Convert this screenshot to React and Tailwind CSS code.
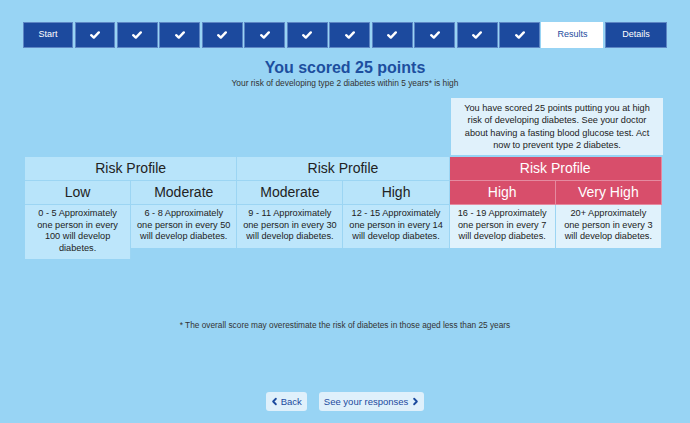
import { ChevronLeft, ChevronRight } from "lucide-react";

const font = { fontFamily: '"Liberation Sans", Arial, sans-serif' };

// tick mark drawn in each completed step
const Tick = () => (
  <svg width="10" height="8" viewBox="0 0 10 8" fill="none">
    <path d="M1.2 4.2 L3.8 6.6 L8.8 1.4" stroke="white" strokeWidth="2.4" strokeLinecap="round" strokeLinejoin="round" />
  </svg>
);

const groups = [
  {
    red: false,
    cols: [
      { label: "Low", lines: ["0 - 5 Approximately", "one person in every", "100 will develop", "diabetes."] },
      { label: "Moderate", lines: ["6 - 8 Approximately", "one person in every 50", "will develop diabetes."] },
    ],
  },
  {
    red: false,
    cols: [
      { label: "Moderate", lines: ["9 - 11 Approximately", "one person in every 30", "will develop diabetes."] },
      { label: "High", lines: ["12 - 15 Approximately", "one person in every 14", "will develop diabetes."] },
    ],
  },
  {
    red: true,
    cols: [
      { label: "High", lines: ["16 - 19 Approximately", "one person in every 7", "will develop diabetes."] },
      { label: "Very High", lines: ["20+ Approximately", "one person in every 3", "will develop diabetes."] },
    ],
  },
];

const advice = [
  "You have scored 25 points putting you at high",
  "risk of developing diabetes. See your doctor",
  "about having a fasting blood glucose test. Act",
  "now to prevent type 2 diabetes.",
];

const RiskGroup = ({ red, cols }) => {
  const head = red
    ? "bg-[#d84e6b] text-white border-[#e58aa0]"
    : "bg-[#b8e4fa] text-[#222] border-[#9cd5f3]";
  const desc = red ? "bg-[#e0f2fc]" : "bg-[#bde6fb]";
  return (
    <div className="flex flex-col w-[212.3px]">
      <div className={`h-[24px] flex items-center justify-center text-[14px] border-b border-r ${head}`}>
        Risk Profile
      </div>
      <div className="flex">
        {cols.map((c) => (
          <div key={c.label} className={`flex-1 h-[24px] flex items-center justify-center text-[14px] border-b border-r ${head}`}>
            {c.label}
          </div>
        ))}
      </div>
      <div className="flex items-start">
        {cols.map((c) => (
          <div key={c.label} className={`flex-1 pt-[3px] pb-[5px] text-center text-[9.2px] leading-[11.5px] text-[#222] border-r border-[#9cd5f3] ${desc}`}>
            {c.lines.map((l) => (
              <div key={l} className="whitespace-nowrap">{l}</div>
            ))}
          </div>
        ))}
      </div>
    </div>
  );
};

export default function App() {
  const ticks = Array.from({ length: 11 });
  return (
    <div className="w-[690px] h-[423px] bg-[#98d4f4] px-[23px] pt-[22px]" style={font}>
      {/* step bar */}
      <nav className="flex gap-[1.5px] h-[26px] text-[9px]">
        <div className="w-[50px] bg-[#1c4a9e] text-white flex items-center justify-center border border-[#5d86c4]">Start</div>
        {ticks.map((_, i) => (
          <div key={i} className="flex-1 bg-[#1c4a9e] flex items-center justify-center border border-[#5d86c4]">
            <Tick />
          </div>
        ))}
        <div className="w-[62px] bg-white text-[#1c4a9e] flex items-center justify-center">Results</div>
        <div className="w-[62px] bg-[#1c4a9e] text-white flex items-center justify-center border border-[#5d86c4]">Details</div>
      </nav>

      <h1 className="mt-[10px] text-center text-[16px] font-bold leading-[20px] text-[#1d4f9f]">You scored 25 points</h1>
      <p className="text-center text-[8.4px] leading-[10px] text-[#333]">
        Your risk of developing type 2 diabetes within 5 years* is high
      </p>

      <div className="flex justify-end mt-[10px] mr-[4px]">
        <div className="w-[212px] h-[57px] bg-[#e0f1fb] flex flex-col items-center justify-center text-center text-[9.2px] leading-[12.5px] text-[#222]">
          {advice.map((l) => (
            <div key={l} className="whitespace-nowrap">{l}</div>
          ))}
        </div>
      </div>

      {/* risk profile table */}
      <div className="flex items-start ml-[2px] mt-[2px]">
        {groups.map((g, i) => (
          <RiskGroup key={i} {...g} />
        ))}
      </div>

      <p className="mt-[60px] text-center text-[8.3px] text-[#333]">
        * The overall score may overestimate the risk of diabetes in those aged less than 25 years
      </p>

      <div className="flex justify-center gap-[12px] mt-[61px]">
        <button className="h-[19px] px-[3px] pr-[5px] rounded-[3px] bg-[#dff0fb] text-[#1c4a9e] text-[9.5px] flex items-center gap-[1px]">
          <ChevronLeft size={11} strokeWidth={4} />
          Back
        </button>
        <button className="h-[19px] pl-[5px] pr-[3px] rounded-[3px] bg-[#dff0fb] text-[#1c4a9e] text-[9.5px] flex items-center gap-[2px]">
          See your responses
          <ChevronRight size={11} strokeWidth={4} />
        </button>
      </div>
    </div>
  );
}
